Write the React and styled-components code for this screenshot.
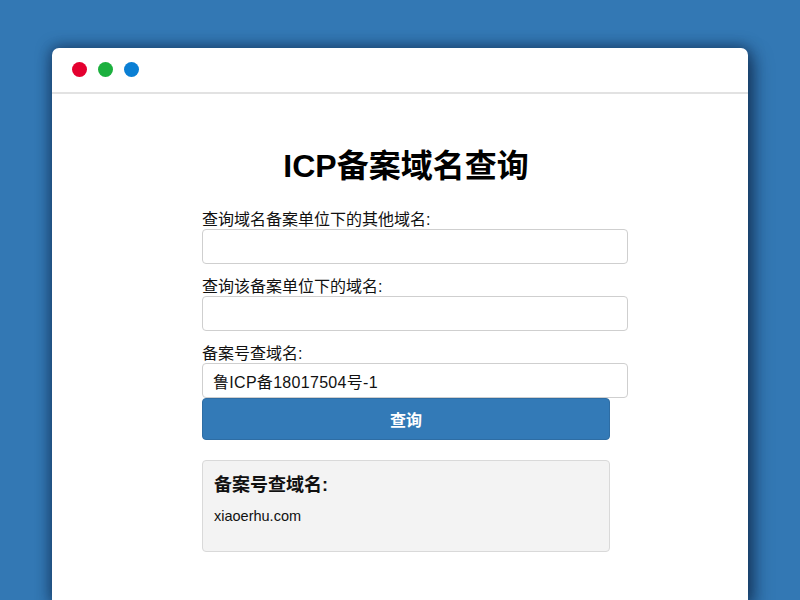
import React from "react";
import styled, { createGlobalStyle } from "styled-components";

const Global = createGlobalStyle`
  html, body { margin: 0; padding: 0; }
  body {
    background: #3378b4;
    font-family: "Liberation Sans", Arial, "Noto Sans CJK SC", sans-serif;
    color: #111;
    overflow: hidden;
  }
`;

const Stage = styled.div`
  width: 800px;
  height: 600px;
  box-sizing: border-box;
  padding: 48px 52px 0 52px;
  display: flex;
`;

const Window = styled.div`
  flex: 1;
  background: #fff;
  border-radius: 7px 7px 0 0;
  box-shadow: 0 0 14px 2px rgba(10, 30, 60, 0.55), 6px 8px 18px rgba(10, 30, 60, 0.5);
  display: flex;
  flex-direction: column;
`;

const TitleBar = styled.div`
  height: 46px;
  border-bottom: 2px solid #e2e2e2;
  display: flex;
  align-items: center;
  gap: 11px;
  padding-left: 20px;
  padding-bottom: 1px;
  box-sizing: border-box;
`;

const Dot = styled.span`
  width: 15px;
  height: 15px;
  border-radius: 50%;
  background: ${(p) => p.$color};
`;

const Body = styled.div`
  padding: 50px 0 0 150px;
`;

const Container = styled.div`
  width: 408px;
  display: flex;
  flex-direction: column;
`;

const Title = styled.h1`
  margin: 0 0 22px 0;
  font-size: 32px;
  font-weight: bold;
  text-align: center;
  line-height: 44px;
  color: #000;
`;

const Label = styled.label`
  font-size: 16px;
  line-height: 19px;
  color: #111;
`;

const Input = styled.input`
  box-sizing: border-box;
  width: 426px;
  height: 35px;
  margin: 0 0 13px 0;
  padding: 0 10px;
  border: 1px solid #cfcfcf;
  border-radius: 4px;
  font-family: inherit;
  font-size: 16px;
  letter-spacing: 0.3px;
  color: #111;
  background: #fff;
  outline: none;
  &:last-of-type { margin-bottom: 0; }
`;

const Button = styled.button`
  box-sizing: border-box;
  width: 408px;
  height: 42px;
  background: #337ab7;
  border: 1px solid #2e6da4;
  border-radius: 4px;
  color: #fff;
  font-family: inherit;
  font-size: 16px;
  font-weight: bold;
  cursor: pointer;
`;

const Result = styled.div`
  box-sizing: border-box;
  margin-top: 20px;
  width: 408px;
  height: 92px;
  background: #f3f3f3;
  border: 1px solid #d9d9d9;
  border-radius: 4px;
  padding: 10px 11px;
`;

const ResultTitle = styled.h3`
  margin: 2px 0 10px 0;
  font-size: 18px;
  font-weight: bold;
  line-height: 24px;
  color: #111;
`;

const ResultText = styled.p`
  margin: 0;
  font-size: 14.5px;
  line-height: 18px;
  color: #111;
`;

export default function App() {
  return (
    <>
      <Global />
      <Stage>
        <Window>
          <TitleBar>
            <Dot $color="#e4002f" />
            <Dot $color="#1cb03e" />
            <Dot $color="#0a7fd4" />
          </TitleBar>
          <Body>
            <Container>
              <Title>ICP备案域名查询</Title>
              <Label>查询域名备案单位下的其他域名:</Label>
              <Input type="text" />
              <Label>查询该备案单位下的域名:</Label>
              <Input type="text" />
              <Label>备案号查域名:</Label>
              <Input type="text" defaultValue="鲁ICP备18017504号-1" />
              <Button>查询</Button>
              <Result>
                <ResultTitle>备案号查域名:</ResultTitle>
                <ResultText>xiaoerhu.com</ResultText>
              </Result>
            </Container>
          </Body>
        </Window>
      </Stage>
    </>
  );
}
